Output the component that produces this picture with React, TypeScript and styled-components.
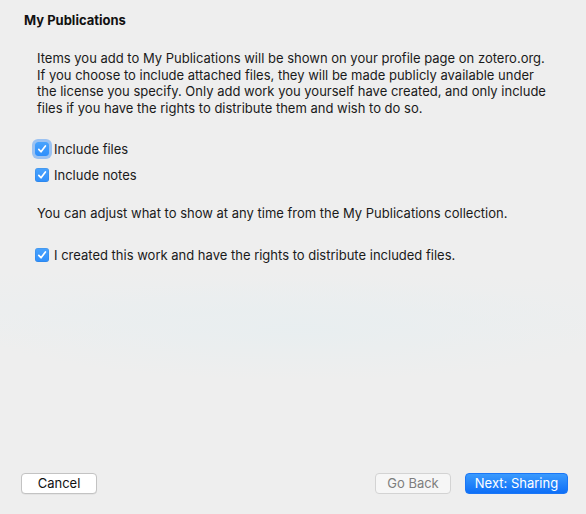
import React from "react";
import styled, { createGlobalStyle } from "styled-components";

const Global = createGlobalStyle`
  html, body { margin: 0; padding: 0; }
  body {
    background: #eeeeee;
    font-family: Inter, "Liberation Sans", Arial, sans-serif;
    color: #1a1a1a;
    -webkit-font-smoothing: antialiased;
  }
`;

const Window = styled.div`
  position: relative;
  width: 586px;
  height: 514px;
  box-sizing: border-box;
  display: flex;
  flex-direction: column;
  overflow: hidden;
  background:
    radial-gradient(ellipse 320px 50px at 300px 330px, rgba(232,238,240,0.9), rgba(238,238,238,0) 100%),
    radial-gradient(ellipse 600px 40px at 200px 310px, rgba(234,238,240,0.7), rgba(238,238,238,0) 100%),
    #eeeeee;
`;

const Title = styled.h1`
  margin: 0;
  padding: 12px 0 0 24px;
  font-size: 13px;
  line-height: 16px;
  font-weight: 700;
  color: #111;
`;

const Content = styled.div`
  flex: 1;
  padding: 0 20px 0 37px;
  display: flex;
  flex-direction: column;
`;

const Paragraph = styled.p<{ $top: number }>`
  margin: ${(p) => p.$top}px 0 0 0;
  font-size: 13px;
  line-height: 16.6px;
  color: #1a1a1a;
  white-space: nowrap;
`;

const CheckRow = styled.label<{ $top: number }>`
  display: flex;
  align-items: center;
  gap: 5px;
  margin: ${(p) => p.$top}px 0 0 -2px;
  font-size: 13px;
  line-height: 16px;
  height: 16px;
  color: #1a1a1a;
`;

const Box = styled.span<{ $focus?: boolean }>`
  width: 14px;
  height: 14px;
  box-sizing: border-box;
  border-radius: 3px;
  background: linear-gradient(#4aa3fd, #2f8ffb);
  display: inline-flex;
  align-items: center;
  justify-content: center;
  flex: none;
  box-shadow: ${(p) =>
    p.$focus ? "0 0 0 3px rgba(110, 170, 245, 0.65)" : "inset 0 0 0 0.5px rgba(0,0,0,0.1)"};
`;

const Footer = styled.div`
  display: flex;
  align-items: center;
  padding: 0 18px 20px 21px;
  gap: 14px;
`;

const Spacer = styled.div`
  flex: 1;
`;

const Button = styled.button<{ $variant?: "primary" | "disabled"; $w: number }>`
  width: ${(p) => p.$w}px;
  height: 21px;
  box-sizing: border-box;
  padding: 0;
  border-radius: 4px;
  font-family: inherit;
  font-size: 13px;
  line-height: 19px;
  cursor: default;
  ${(p) =>
    p.$variant === "primary"
      ? `
    background: linear-gradient(#3a9afd, #0e6ff7);
    color: #fff;
    border: 1px solid #1a76f6;
  `
      : p.$variant === "disabled"
      ? `
    background: #f6f6f6;
    color: #7e7e7e;
    border: 1px solid #d3d3d3;
  `
      : `
    background: #ffffff;
    color: #111;
    border: 1px solid #c3c3c3;
    box-shadow: 0 0.5px 0.5px rgba(0,0,0,0.08);
  `}
`;

const Check = () => (
  <svg width="10" height="10" viewBox="0 0 10 10">
    <path d="M1.8 5.4 L4 7.8 L8.4 2" fill="none" stroke="#fff" strokeWidth="1.7" strokeLinecap="round" strokeLinejoin="round" />
  </svg>
);

export default function App() {
  return (
    <Window>
      <Global />
      <Title>My Publications</Title>
      <Content>
        <Paragraph $top={22}>
          Items you add to My Publications will be shown on your profile page on zotero.org.
          <br />
          If you choose to include attached files, they will be made publicly available under
          <br />
          the license you specify. Only add work you yourself have created, and only include
          <br />
          files if you have the rights to distribute them and wish to do so.
        </Paragraph>
        <CheckRow $top={25}>
          <Box $focus><Check /></Box>
          Include files
        </CheckRow>
        <CheckRow $top={10}>
          <Box><Check /></Box>
          Include notes
        </CheckRow>
        <Paragraph $top={22}>
          You can adjust what to show at any time from the My Publications collection.
        </Paragraph>
        <CheckRow $top={25}>
          <Box><Check /></Box>
          I created this work and have the rights to distribute included files.
        </CheckRow>
      </Content>
      <Footer>
        <Button $w={76}>Cancel</Button>
        <Spacer />
        <Button $variant="disabled" $w={76}>Go Back</Button>
        <Button $variant="primary" $w={103}>Next: Sharing</Button>
      </Footer>
    </Window>
  );
}
